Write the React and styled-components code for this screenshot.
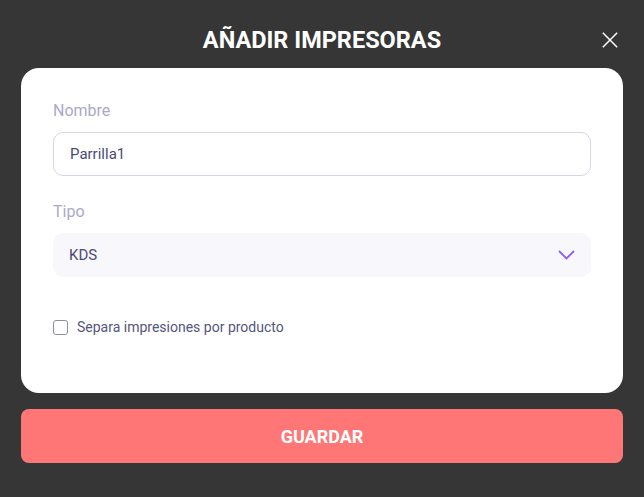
import React from "react";
import styled, { createGlobalStyle } from "styled-components";

const Global = createGlobalStyle`
  html, body { margin: 0; padding: 0; background: #353635; }
  body { font-family: Roboto, "Liberation Sans", sans-serif; }
  * { box-sizing: border-box; }
`;

const Page = styled.div`
  width: 644px;
  height: 497px;
  background: #353635;
  padding: 21px 21px 0 21px;
  display: flex;
  flex-direction: column;
`;

const Header = styled.div`
  position: relative;
  height: 38px;
  display: flex;
  align-items: center;
  justify-content: center;
  margin-bottom: 9px;
`;

const Title = styled.h1`
  margin: 0;
  color: #ffffff;
  font-size: 23.5px;
  font-weight: 700;
  letter-spacing: 0;
`;

const Close = styled.button`
  position: absolute;
  right: 5px;
  top: 10px;
  width: 17px;
  height: 17px;
  padding: 0;
  border: 0;
  background: transparent;
  display: flex;
  align-items: center;
  justify-content: center;
`;

const Card = styled.div`
  background: #ffffff;
  border-radius: 18px;
  height: 325px;
  padding: 34px 32px 0 32px;
  display: flex;
  flex-direction: column;
`;

const Field = styled.div`
  display: flex;
  flex-direction: column;
  margin-bottom: ${(p) => p.$mb || 0}px;
`;

const Label = styled.label`
  color: #aba9c9;
  font-size: 16px;
  line-height: 18px;
  margin-bottom: 12px;
`;

const Input = styled.div`
  height: 44px;
  border: 1px solid #d8d5ea;
  border-radius: 10px;
  display: flex;
  align-items: center;
  padding: 0 16px;
  color: #4b4a7a;
  font-size: 15px;
`;

const Select = styled.div`
  height: 44px;
  background: #f8f8fc;
  border-radius: 10px;
  display: flex;
  align-items: center;
  justify-content: space-between;
  padding: 0 16px 0 16px;
  color: #4b4a7a;
  font-size: 15px;
`;

const CheckRow = styled.label`
  display: flex;
  align-items: center;
  gap: 9px;
  color: #55557d;
  font-size: 14px;
`;

const Box = styled.span`
  width: 15px;
  height: 15px;
  border: 1px solid #8e8cae;
  border-radius: 3px;
  display: inline-block;
`;

const Save = styled.button`
  margin-top: 16px;
  height: 54px;
  border: 0;
  border-radius: 8px;
  background: #ff7676;
  color: #ffffff;
  font-family: Roboto, "Liberation Sans", sans-serif;
  font-size: 18px;
  font-weight: 700;
  letter-spacing: 0;
`;

export default function App() {
  return (
    <>
      <Global />
      <Page>
        <Header>
          <Title>AÑADIR IMPRESORAS</Title>
          <Close aria-label="cerrar">
            <svg width="16" height="16" viewBox="0 0 16 16">
              <path d="M0.8 0.8L15.2 15.2M15.2 0.8L0.8 15.2" stroke="#ffffff" strokeWidth="1.5" fill="none" />
            </svg>
          </Close>
        </Header>
        <Card>
          <Field $mb={27}>
            <Label>Nombre</Label>
            <Input>Parrilla1</Input>
          </Field>
          <Field $mb={42}>
            <Label>Tipo</Label>
            <Select>
              <span>KDS</span>
              <svg width="17" height="10" viewBox="0 0 17 10">
                <path d="M1 1L8.5 8.5L16 1" stroke="#8b5cf6" strokeWidth="1.8" fill="none" />
              </svg>
            </Select>
          </Field>
          <CheckRow>
            <Box />
            Separa impresiones por producto
          </CheckRow>
        </Card>
        <Save>GUARDAR</Save>
      </Page>
    </>
  );
}
